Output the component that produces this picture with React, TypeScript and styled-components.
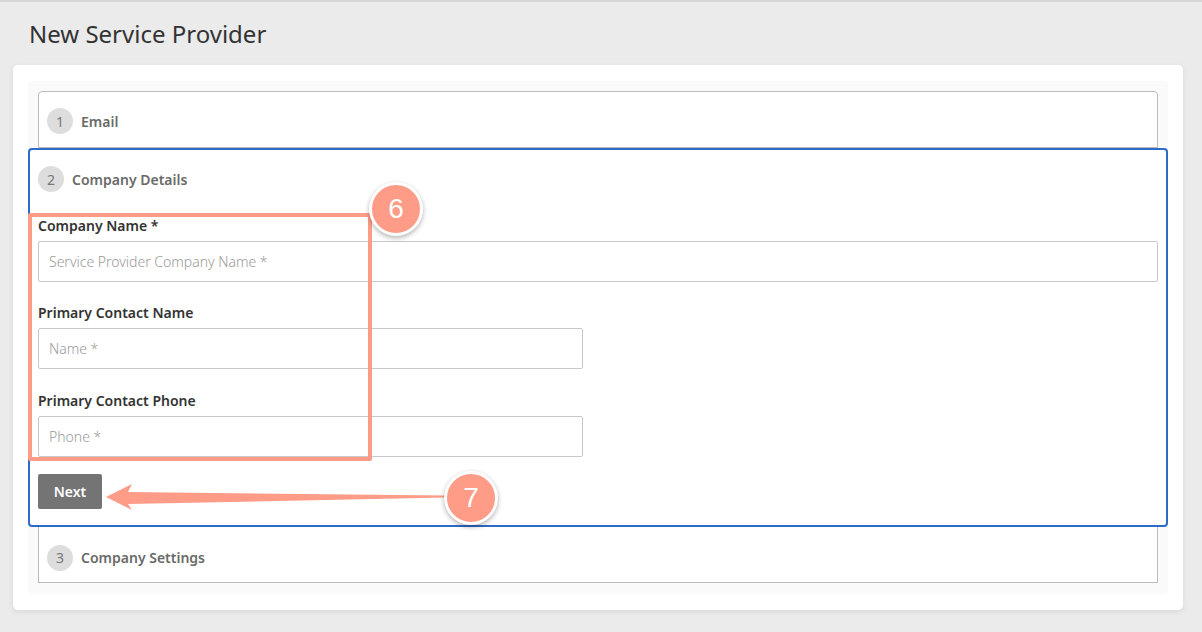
import React from 'react';
import styled, { createGlobalStyle } from 'styled-components';

const GlobalStyle = createGlobalStyle`
    html, body {
        margin: 0;
        padding: 0;
        background: #ebebeb;
    }
    body {
        font-family: 'Noto Sans', 'Open Sans', sans-serif;
        color: #333;
    }
`;

const Page = styled.div`
    position: relative;
    min-height: 632px;
    box-sizing: border-box;
    border-top: 2px solid #d6d6d6;
    padding-bottom: 20px;
`;

const Title = styled.h1`
    margin: 0;
    padding: 16px 0 0 29px;
    height: 47px;
    font-size: 24px;
    font-weight: 400;
    color: #333;
    line-height: 32px;
`;

const Card = styled.div`
    margin: 0 19px 0 13px;
    padding: 16px 15px;
    background: #fff;
    border-radius: 5px;
    box-shadow: 0 2px 6px rgba(0, 0, 0, 0.08);
`;

const Panel = styled.div`
    background: #fafafa;
    border-radius: 4px;
    padding: 10px 10px 11px;
`;

const Step = styled.section<{ $active?: boolean; $first?: boolean }>`
    background: #fff;
    border: ${(p) => (p.$active ? '2px solid #2e6bc6' : '1px solid #bbb')};
    border-top-width: ${(p) => (p.$active || p.$first ? undefined : '0')};
    border-radius: ${(p) => (p.$active ? '4px' : p.$first ? '4px 4px 0 0' : '0')};
    margin: ${(p) => (p.$active ? '0 -10px' : '0')};
`;

const StepHeader = styled.div<{ $height: number; $offset?: number }>`
    display: flex;
    align-items: center;
    gap: 8px;
    box-sizing: border-box;
    height: ${(p) => p.$height}px;
    padding-left: 8px;
    padding-top: ${(p) => p.$offset ?? 0}px;
`;

const StepNumber = styled.span`
    width: 26px;
    height: 26px;
    border-radius: 50%;
    background: #dddddd;
    color: #777;
    font-size: 14px;
    display: flex;
    align-items: center;
    justify-content: center;
`;

const StepTitle = styled.span`
    font-size: 14px;
    font-weight: 600;
    color: #6a6a6a;
`;

const StepBody = styled.div`
    padding: 8px 8px 16px;
`;

const FormGroup = styled.div<{ $gap: number }>`
    margin-bottom: ${(p) => p.$gap}px;
`;

const Label = styled.label`
    display: block;
    font-size: 14px;
    font-weight: 600;
    color: #333;
    line-height: 20px;
    margin-bottom: 5px;
`;

const Input = styled.input<{ $half?: boolean }>`
    display: block;
    box-sizing: border-box;
    width: ${(p) => (p.$half ? '545px' : '100%')};
    height: 41px;
    padding: 0 10px;
    border: 1px solid #c8c8c8;
    border-radius: 2px;
    font-family: inherit;
    font-size: 14px;
    color: #333;
    background: #fff;
    outline: none;

    &::placeholder {
        color: #9a9a9a;
        font-weight: 300;
    }
`;

const NextButton = styled.button`
    display: block;
    width: 64px;
    height: 35px;
    border: none;
    border-radius: 2px;
    background: #747474;
    color: #fff;
    font-family: inherit;
    font-size: 14px;
    font-weight: 600;
    cursor: pointer;
`;

const HighlightBox = styled.div`
    position: absolute;
    left: 28px;
    top: 211px;
    width: 336px;
    height: 240px;
    border: 4px solid #fe9c88;
    border-radius: 2px;
    pointer-events: none;
`;

const Badge = styled.div<{ $x: number; $y: number }>`
    position: absolute;
    left: ${(p) => p.$x - 27}px;
    top: ${(p) => p.$y - 27}px;
    width: 48px;
    height: 48px;
    border-radius: 50%;
    border: 3px solid #fff;
    background: #fe9c88;
    color: #fff;
    font-family: 'Liberation Sans', Arial, sans-serif;
    font-size: 28px;
    display: flex;
    align-items: center;
    justify-content: center;
    box-shadow: 0 2px 5px rgba(0, 0, 0, 0.3);
`;

const ArrowSvg = styled.svg`
    position: absolute;
    left: 100px;
    top: 478px;
`;

const App: React.FC = () => {
    return (
        <Page>
            <GlobalStyle />
            <Title>New Service Provider</Title>
            <Card>
                <Panel>
                    <Step $first>
                        <StepHeader $height={55} $offset={3}>
                            <StepNumber>1</StepNumber>
                            <StepTitle>Email</StepTitle>
                        </StepHeader>
                    </Step>
                    <Step $active>
                        <StepHeader $height={58}>
                            <StepNumber>2</StepNumber>
                            <StepTitle>Company Details</StepTitle>
                        </StepHeader>
                        <StepBody>
                            <FormGroup $gap={21}>
                                <Label>Company Name *</Label>
                                <Input placeholder="Service Provider Company Name *" />
                            </FormGroup>
                            <FormGroup $gap={22}>
                                <Label>Primary Contact Name</Label>
                                <Input $half placeholder="Name *" />
                            </FormGroup>
                            <FormGroup $gap={17}>
                                <Label>Primary Contact Phone</Label>
                                <Input $half placeholder="Phone *" />
                            </FormGroup>
                            <NextButton type="button">Next</NextButton>
                        </StepBody>
                    </Step>
                    <Step>
                        <StepHeader $height={55} $offset={6}>
                            <StepNumber>3</StepNumber>
                            <StepTitle>Company Settings</StepTitle>
                        </StepHeader>
                    </Step>
                </Panel>
            </Card>

            <HighlightBox />
            <ArrowSvg width="350" height="34" viewBox="0 0 350 34">
                <path
                    d="M6 17 L32 4 L28 12 L345 15.5 L345 17.5 L28 24 L32 30 Z"
                    fill="#fe9c88"
                />
            </ArrowSvg>
            <Badge $x={396} $y={207}>6</Badge>
            <Badge $x={471} $y={496}>7</Badge>
        </Page>
    );
};

export default App;
